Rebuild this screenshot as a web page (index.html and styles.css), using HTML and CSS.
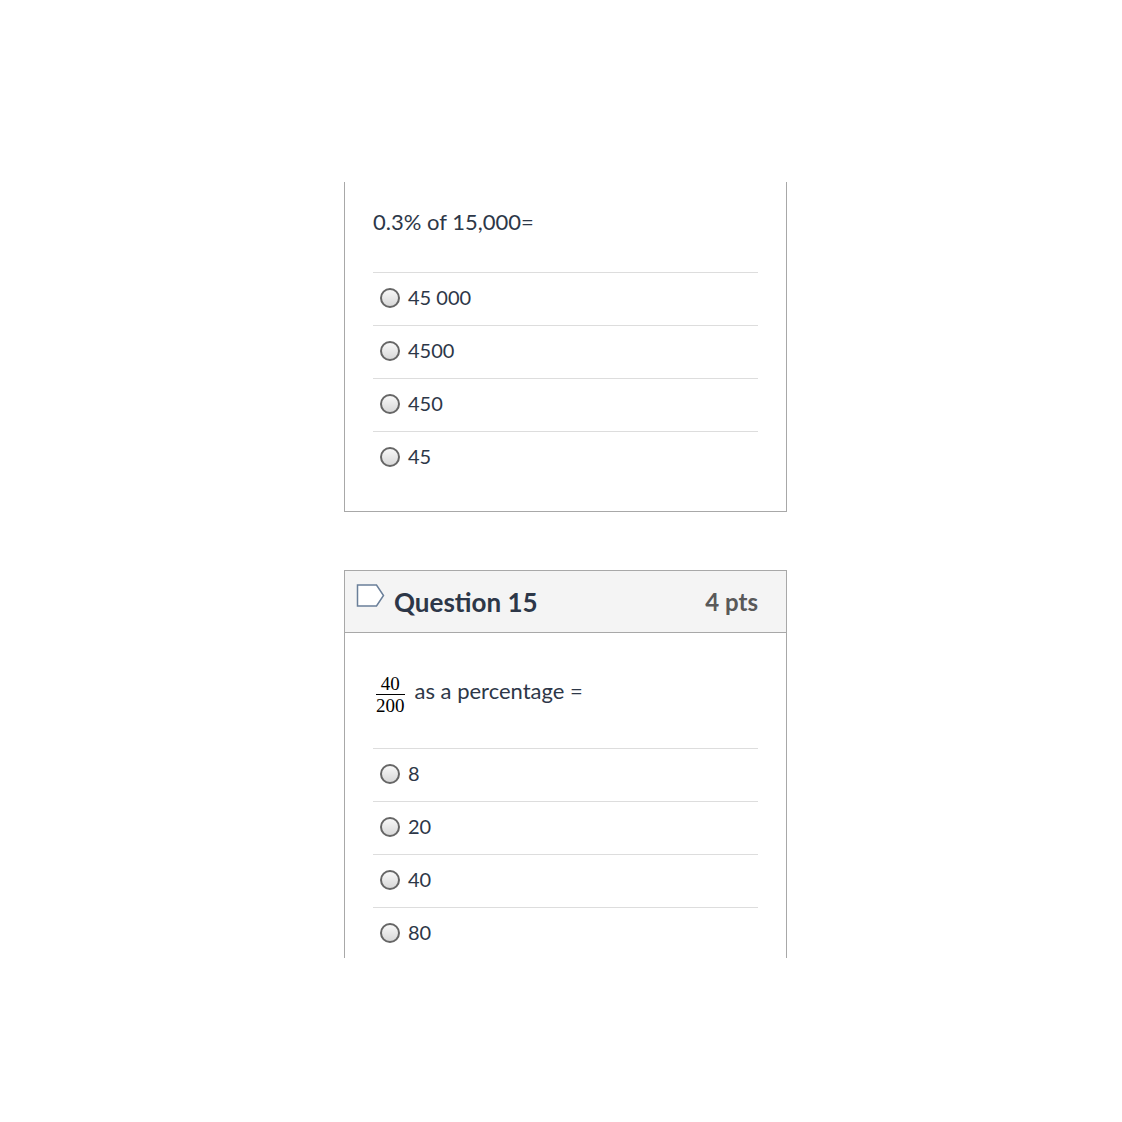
FILE: index.html
```html
<!DOCTYPE html>
<html lang="en">
<head>
    <meta charset="UTF-8">
    <meta name="viewport" content="width=device-width, initial-scale=1.0">
    <title>Quiz</title>
    <link rel="stylesheet" href="styles.css">
</head>
<body>
    <main class="quiz">
        <form class="question question-continued">
            <fieldset class="question-body">
                <legend class="question-text">0.3% of 15,000=</legend>
                <div class="answers">
                    <label class="answer"><input type="radio" name="q14" value="45000"><span>45 000</span></label>
                    <label class="answer"><input type="radio" name="q14" value="4500"><span>4500</span></label>
                    <label class="answer"><input type="radio" name="q14" value="450"><span>450</span></label>
                    <label class="answer"><input type="radio" name="q14" value="45"><span>45</span></label>
                </div>
            </fieldset>
        </form>

        <form class="question question-open">
            <header class="question-header">
                <svg class="flag" width="30" height="24" viewBox="0 0 30 24" aria-hidden="true">
                    <path d="M1.5 1H20.5L27.5 11.5L20.5 22H1.5Z" fill="#fff" stroke="#6a7f99" stroke-width="1.5"/>
                </svg>
                <h2>Question 15</h2>
                <span class="points">4 pts</span>
            </header>
            <fieldset class="question-body">
                <legend class="question-text">
                    <span class="fraction"><span class="numerator">40</span><span>200</span></span>
                    <span>as a percentage =</span>
                </legend>
                <div class="answers">
                    <label class="answer"><input type="radio" name="q15" value="8"><span>8</span></label>
                    <label class="answer"><input type="radio" name="q15" value="20"><span>20</span></label>
                    <label class="answer"><input type="radio" name="q15" value="40"><span>40</span></label>
                    <label class="answer"><input type="radio" name="q15" value="80"><span>80</span></label>
                </div>
            </fieldset>
        </form>
    </main>
</body>
</html>
```
FILE: styles.css
```css
body {
    font-family: Lato, "Liberation Sans", sans-serif;
    background-color: #fff;
    color: #2d3748;
    margin: 0;
    padding: 182px 0 40px 9px;
}

.quiz {
    max-width: 443px;
    margin: 0 auto;
}

.question {
    border: 1px solid #a8a8a8;
    margin-bottom: 58px;
}

.question-continued {
    border-top: none;
    padding-bottom: 29px;
}

.question-open {
    border-bottom: none;
}

.question-header {
    display: flex;
    align-items: center;
    gap: 8px;
    height: 61px;
    padding: 0 28px 0 11px;
    background-color: #f4f4f4;
    border-bottom: 1px solid #a8a8a8;
}

.flag {
    margin-bottom: 12px;
}

h2 {
    margin: 0;
    flex: 1;
    font-size: 26px;
}

.points {
    color: #595959;
    font-size: 24px;
    font-weight: bold;
}

.question-body {
    border: none;
    margin: 0;
    padding: 0 28px;
    min-width: 0;
}

.question-text {
    display: flex;
    align-items: flex-start;
    gap: 10px;
    padding: 26px 0 36px;
    font-size: 22px;
    line-height: 28px;
}

.question-open .question-text {
    padding: 40px 0 32px 3px;
    line-height: 36px;
}

.fraction {
    display: flex;
    flex-direction: column;
    color: #000;
    font-family: "Liberation Serif", serif;
    font-size: 19px;
    line-height: 21px;
    text-align: center;
}

.numerator {
    border-bottom: 1px solid #000;
}

.answer {
    display: flex;
    align-items: center;
    gap: 8px;
    height: 50px;
    padding: 0 0 2px 7px;
    border-top: 1px solid #ddd;
    font-size: 20px;
    line-height: 24px;
    cursor: pointer;
}

.answer:last-child {
    padding-bottom: 0;
}

.answer span {
    padding-bottom: 2px;
}

.answer input {
    appearance: none;
    width: 20px;
    height: 20px;
    margin: 0;
    border: 2px solid #666;
    border-radius: 50%;
    background: linear-gradient(#f8f8f8, #d8d8d8);
}

.answer input:checked {
    background: radial-gradient(#444 35%, #e6e6e6 40%);
}
```
